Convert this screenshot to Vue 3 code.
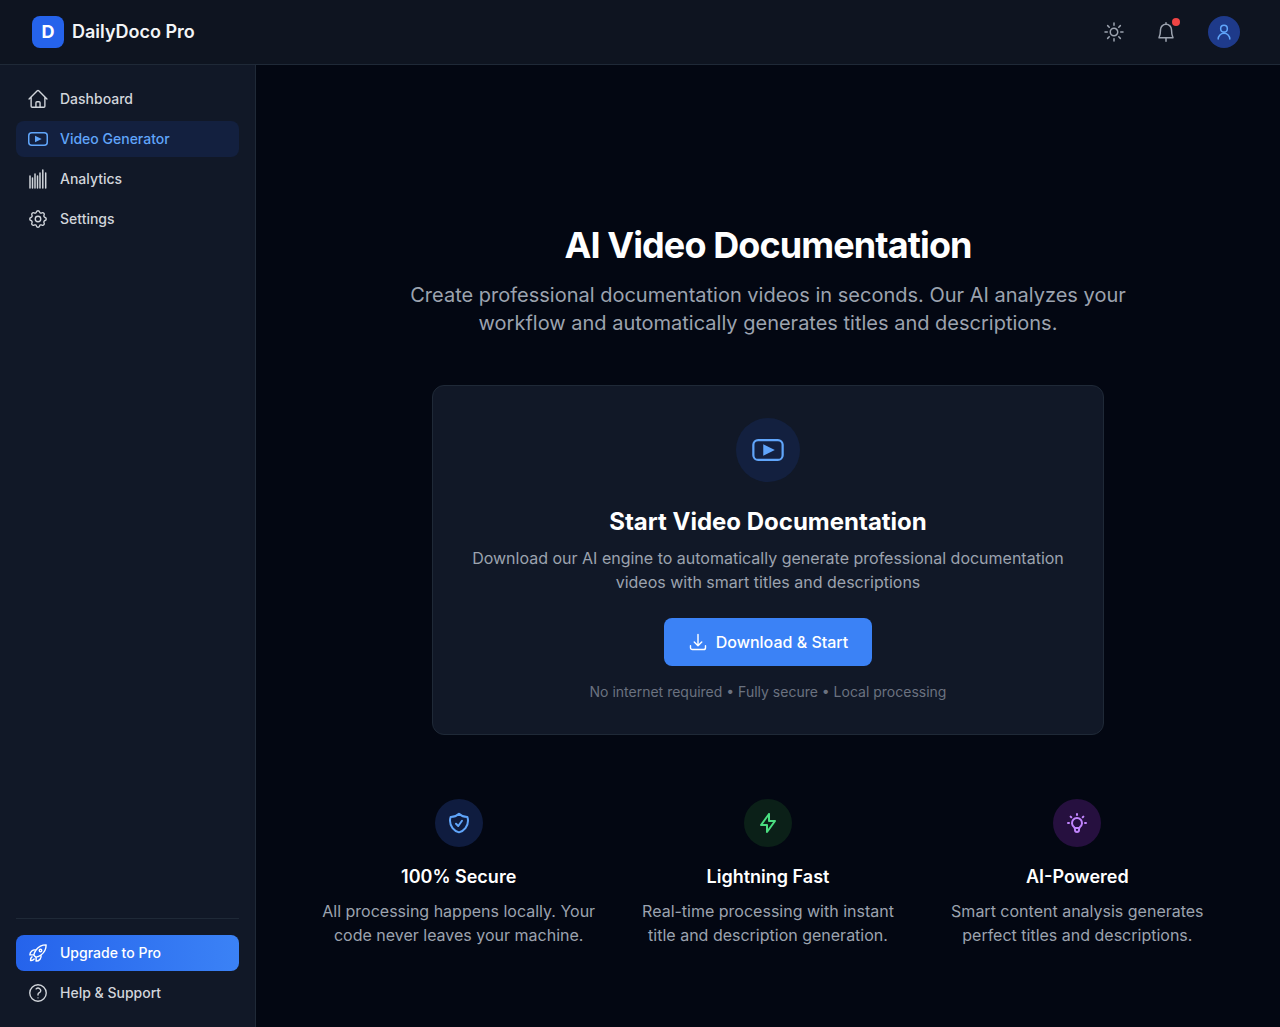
<template>
  <div class="app">
    <header class="topbar">
      <div class="brand">
        <div class="logo">D</div>
        <span class="brand-name">DailyDoco Pro</span>
      </div>
      <div class="top-actions">
        <button class="icon-btn">
          <svg class="ic" viewBox="0 0 24 24"><path d="M12 3v2.25m6.364.386l-1.591 1.591M21 12h-2.25m-.386 6.364l-1.591-1.591M12 18.75V21m-4.773-4.227l-1.591 1.591M5.25 12H3m4.227-4.773L5.636 5.636M15.75 12a3.75 3.75 0 11-7.5 0 3.75 3.75 0 017.5 0z" /></svg>
        </button>
        <button class="icon-btn bell">
          <svg class="ic" viewBox="0 0 24 24"><path d="M12 2.75v1.500M12 4.250a5.500 5.500 0 0 0-5.500 5.500c0 3.500-.5 6-1.500 8h14c-1-2-1.500-4.500-1.500-8a5.500 5.500 0 0 0-5.500-5.500zM12 17.750v3.500" /></svg>
          <span class="dot"></span>
        </button>
        <div class="avatar">
          <svg class="ic small" viewBox="0 0 24 24"><path d="M12 12a4 4 0 1 0 0-8 4 4 0 0 0 0 8zM5 20.500a7 7 0 0 1 14 0" /></svg>
        </div>
      </div>
    </header>

    <div class="body">
      <aside class="sidebar">
        <nav class="nav">
          <a class="nav-item">
            <svg class="ic s22" viewBox="0 0 24 24"><path d="M2.25 12l8.954-8.955c.44-.439 1.152-.439 1.591 0L21.75 12M4.5 9.75v10.125c0 .621.504 1.125 1.125 1.125H9.75v-4.875c0-.621.504-1.125 1.125-1.125h2.25c.621 0 1.125.504 1.125 1.125V21h4.125c.621 0 1.125-.504 1.125-1.125V9.75M8.25 21h8.25" /></svg>
            <span>Dashboard</span>
          </a>
          <a class="nav-item active">
            <svg class="ic" viewBox="0 0 24 24"><rect x="2.750" y="5.750" width="18.500" height="12.500" rx="3" /><path class="solid" d="M9 8.700l6.700 3.300-6.700 3.300z" /></svg>
            <span>Video Generator</span>
          </a>
          <a class="nav-item">
            <svg class="ic" viewBox="0 0 24 24"><path d="M4 9v12M6.500 11v10M9 7v14M11.500 9v12M14 6v15M16.800 3v18M19.700 6v15" /></svg>
            <span>Analytics</span>
          </a>
          <a class="nav-item">
            <svg class="ic s22" viewBox="0 0 24 24"><path d="M10.325 4.317c.426 -1.756 2.924 -1.756 3.35 0a1.724 1.724 0 0 0 2.573 1.066c1.543 -.94 3.31 .826 2.37 2.37a1.724 1.724 0 0 0 1.065 2.572c1.756 .426 1.756 2.924 0 3.35a1.724 1.724 0 0 0 -1.066 2.573c.94 1.543 -.826 3.31 -2.37 2.37a1.724 1.724 0 0 0 -2.572 1.065c-.426 1.756 -2.924 1.756 -3.35 0a1.724 1.724 0 0 0 -2.573 -1.066c-1.543 .94 -3.31 -.826 -2.37 -2.37a1.724 1.724 0 0 0 -1.065 -2.572c-1.756 -.426 -1.756 -2.924 0 -3.35a1.724 1.724 0 0 0 1.066 -2.573c-.94 -1.543 .826 -3.31 2.37 -2.37c1 .608 2.296 .07 2.572 -1.065zM9 12a3 3 0 1 0 6 0a3 3 0 0 0 -6 0" /></svg>
            <span>Settings</span>
          </a>
        </nav>
        <div class="side-bottom">
          <a class="nav-item upgrade">
            <svg class="ic s20" viewBox="0 0 24 24"><path d="M15.59 14.37a6 6 0 01-5.84 7.38v-4.8m5.84-2.58a14.98 14.98 0 006.16-12.12A14.98 14.98 0 009.631 8.41m5.96 5.96a14.926 14.926 0 01-5.841 2.58m-.119-8.54a6 6 0 00-7.381 5.84h4.8m2.581-5.84a14.927 14.927 0 00-2.58 5.84m2.699 2.7c-.103.021-.207.041-.311.06a15.09 15.09 0 01-2.448-2.448 14.9 14.9 0 01.06-.312m-2.24 2.39a4.493 4.493 0 00-1.757 4.306 4.493 4.493 0 004.306-1.758M16.5 9a1.5 1.5 0 11-3 0 1.5 1.5 0 013 0z" /></svg>
            <span>Upgrade to Pro</span>
          </a>
          <a class="nav-item">
            <svg class="ic s22" viewBox="0 0 24 24"><path d="M9.879 7.519c1.171-1.025 3.071-1.025 4.242 0 1.172 1.025 1.172 2.687 0 3.712-.203.179-.43.326-.67.442-.745.361-1.45.999-1.45 1.827v.75M21 12a9 9 0 11-18 0 9 9 0 0118 0zm-9 5.250h.008v.008H12v-.008z" /></svg>
            <span>Help &amp; Support</span>
          </a>
        </div>
      </aside>

      <main class="main">
        <h1>AI Video Documentation</h1>
        <p class="lead">Create professional documentation videos in seconds. Our AI analyzes your workflow and automatically generates titles and descriptions.</p>

        <section class="card">
          <div class="card-icon">
            <svg viewBox="0 0 24 24" class="ic big"><rect x="2.750" y="5.750" width="18.500" height="12.500" rx="3" /><path class="solid" d="M9 8.300l7.300 3.700-7.300 3.700z" /></svg>
          </div>
          <h2>Start Video Documentation</h2>
          <p class="card-text">Download our AI engine to automatically generate professional documentation videos with smart titles and descriptions</p>
          <button class="download">
            <svg class="ic dl" viewBox="0 0 24 24"><path d="M3 16.500v2.250A2.250 2.250 0 005.250 21h13.500A2.250 2.250 0 0021 18.750V16.500M16.500 12L12 16.500m0 0L7.500 12m4.500 4.500V3" /></svg>
            Download &amp; Start
          </button>
          <p class="note">No internet required • Fully secure • Local processing</p>
        </section>

        <section class="features">
          <div v-for="f in features" :key="f.title" class="feature">
            <div class="f-icon" :class="f.tone">
              <svg class="ic f" viewBox="0 0 24 24"><path :d="f.path" /></svg>
            </div>
            <h3>{{ f.title }}</h3>
            <p>{{ f.text }}</p>
          </div>
        </section>
      </main>
    </div>
  </div>
</template>

<script setup>
const features = [
  {
    title: '100% Secure',
    text: 'All processing happens locally. Your code never leaves your machine.',
    tone: 'blue',
    path: 'M9 12.75L11.25 15 15 9.75m-3-7.036A11.959 11.959 0 013.598 6 11.99 11.99 0 003 9.749c0 5.592 3.824 10.29 9 11.623 5.176-1.332 9-6.03 9-11.622 0-1.31-.21-2.571-.598-3.751h-.152c-3.196 0-6.1-1.248-8.25-3.285z'
  },
  {
    title: 'Lightning Fast',
    text: 'Real-time processing with instant title and description generation.',
    tone: 'green',
    path: 'M13 3v7h6l-8 11v-7h-6l8-11'
  },
  {
    title: 'AI-Powered',
    text: 'Smart content analysis generates perfect titles and descriptions.',
    tone: 'purple',
    path: 'M3 12h1m8-9v1m8 8h1M5.600 5.600l.7.7m12.100-.7l-.7.7M9 16a5 5 0 1 1 6 0a3.500 3.500 0 0 0-1 3a2 2 0 0 1-4 0a3.500 3.500 0 0 0-1-3M9.700 17h4.600'
  }
]
</script>

<style>
html, body {
  margin: 0;
  background: #030712;
}
</style>

<style scoped>
.app {
  height: 100vh;
  display: flex;
  flex-direction: column;
  overflow: hidden;
  background: #030712;
  font-family: Inter, "Liberation Sans", sans-serif;
  color: #fff;
}

.topbar {
  height: 64px;
  flex-shrink: 0;
  display: flex;
  align-items: center;
  justify-content: space-between;
  padding: 0 40px 0 32px;
  background: #0e1420;
  border-bottom: 1px solid #1f2937;
}

.brand {
  display: flex;
  align-items: center;
  gap: 8px;
}

.logo {
  width: 32px;
  height: 32px;
  border-radius: 8px;
  background: #2563eb;
  display: flex;
  align-items: center;
  justify-content: center;
  font-size: 18px;
  line-height: 28px;
  font-weight: 700;
}

.brand-name {
  font-size: 18px;
  line-height: 28px;
  font-weight: 600;
  color: #f3f4f6;
}

.top-actions {
  display: flex;
  align-items: center;
  gap: 12px;
}

.icon-btn {
  position: relative;
  width: 40px;
  height: 40px;
  display: flex;
  align-items: center;
  justify-content: center;
  background: none;
  border: none;
  padding: 0;
  color: #9ca3af;
}

.bell {
  margin-right: 10px;
}

.dot {
  position: absolute;
  top: 6px;
  right: 6px;
  width: 8px;
  height: 8px;
  border-radius: 50%;
  background: #ef4444;
}

.avatar {
  width: 32px;
  height: 32px;
  border-radius: 50%;
  background: #1e3a8a;
  color: #60a5fa;
  display: flex;
  align-items: center;
  justify-content: center;
}

.ic {
  width: 24px;
  height: 24px;
  flex-shrink: 0;
  fill: none;
  stroke: currentColor;
  stroke-width: 1.5;
  stroke-linecap: round;
  stroke-linejoin: round;
}

.ic .solid {
  fill: currentColor;
  stroke: none;
}

.ic.small {
  width: 20px;
  height: 20px;
  stroke-width: 1.8;
}

.ic.big {
  width: 38px;
  height: 38px;
  stroke-width: 1.4;
}

.ic.dl {
  width: 20px;
  height: 20px;
  stroke-width: 1.7;
}

.ic.f {
  stroke-width: 2;
}

.body {
  flex: 1;
  display: flex;
  min-height: 0;
}

.sidebar {
  width: 255px;
  flex-shrink: 0;
  display: flex;
  flex-direction: column;
  justify-content: space-between;
  background: #111827;
  border-right: 1px solid #1f2937;
}

.nav {
  padding: 16px;
  display: flex;
  flex-direction: column;
  gap: 4px;
}

.nav-item {
  height: 36px;
  display: flex;
  align-items: center;
  gap: 12px;
  padding: 0 12px;
  border-radius: 8px;
  font-size: 14px;
  line-height: 20px;
  font-weight: 500;
  color: #d1d5db;
}

/* icons are drawn bigger than the 20px slot they sit in */
.nav-item .ic {
  margin: -2px;
}

.nav-item .ic.s22 {
  width: 22px;
  height: 22px;
  margin: -1px;
}

.nav-item .ic.s20 {
  width: 20px;
  height: 20px;
  margin: 0;
  stroke-width: 1.7;
}

.nav-item.active {
  background: #13203f;
  color: #60a5fa;
}

.side-bottom {
  margin: 0 16px;
  padding: 16px 0;
  border-top: 1px solid #1f2937;
  display: flex;
  flex-direction: column;
  gap: 4px;
}

.nav-item.upgrade {
  background: linear-gradient(to right, #2563eb, #3b82f6);
  color: #fff;
}

.main {
  flex: 1;
  min-width: 0;
  padding-top: 160px;
  display: flex;
  flex-direction: column;
  align-items: center;
  text-align: center;
}

h1 {
  margin: 0 0 16px;
  font-size: 36px;
  line-height: 40px;
  font-weight: 700;
  letter-spacing: -0.9px;
}

.lead {
  margin: 0 0 48px;
  width: 768px;
  font-size: 20px;
  line-height: 28px;
  color: #9ca3af;
}

.card {
  box-sizing: border-box;
  width: 672px;
  padding: 32px;
  display: flex;
  flex-direction: column;
  align-items: center;
  background: #111827;
  border: 1px solid #1f2937;
  border-radius: 12px;
}

.card-icon {
  width: 64px;
  height: 64px;
  border-radius: 50%;
  background: #13203f;
  color: #60a5fa;
  display: flex;
  align-items: center;
  justify-content: center;
  margin-bottom: 24px;
}

h2 {
  margin: 0 0 8px;
  font-size: 24px;
  line-height: 32px;
  font-weight: 700;
}

.card-text {
  margin: 0 0 24px;
  font-size: 16px;
  line-height: 24px;
  color: #9ca3af;
}

.download {
  height: 48px;
  width: 208px;
  display: flex;
  align-items: center;
  justify-content: center;
  gap: 8px;
  border: none;
  border-radius: 8px;
  background: #3b82f6;
  color: #fff;
  font-family: inherit;
  font-size: 16px;
  font-weight: 500;
}

.note {
  margin: 16px 0 0;
  font-size: 14px;
  line-height: 20px;
  color: #6b7280;
}

.features {
  width: 896px;
  margin-top: 64px;
  display: grid;
  grid-template-columns: repeat(3, 1fr);
  gap: 32px;
}

.feature {
  display: flex;
  flex-direction: column;
  align-items: center;
}

.f-icon {
  width: 48px;
  height: 48px;
  border-radius: 50%;
  display: flex;
  align-items: center;
  justify-content: center;
  margin-bottom: 16px;
}

.f-icon.blue {
  background: #0f1c3f;
  color: #60a5fa;
}

.f-icon.green {
  background: #0b2018;
  color: #4ade80;
}

.f-icon.purple {
  background: #26103f;
  color: #c084fc;
}

h3 {
  margin: 0 0 8px;
  font-size: 18px;
  line-height: 28px;
  font-weight: 600;
}

.feature p {
  margin: 0;
  font-size: 16px;
  line-height: 24px;
  color: #9ca3af;
}
</style>
